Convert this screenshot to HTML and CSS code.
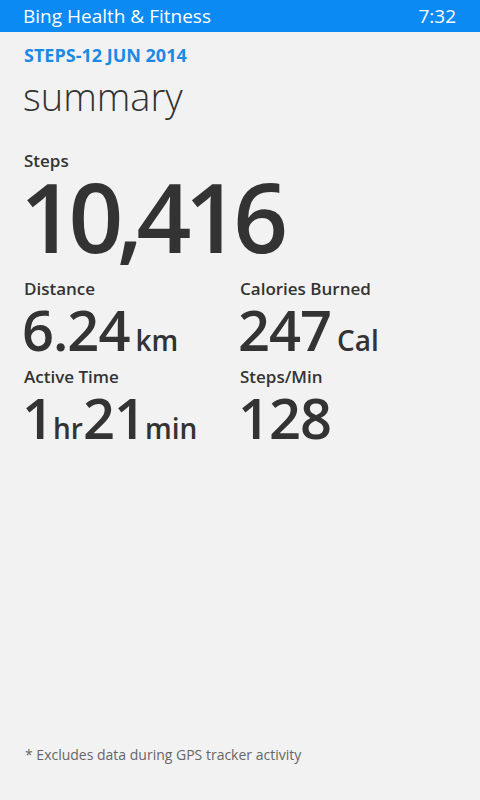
FILE: index.html
```html
<!DOCTYPE html>
<html lang="en">
<head>
  <meta charset="UTF-8">
  <title>Summary</title>
  <link rel="stylesheet" href="styles.css">
</head>
<body>

  <header class="status-bar">
    <span class="app-name">Bing Health &amp; Fitness</span>
    <span class="clock">7:32</span>
  </header>

  <main class="page">
    <div class="pivot-title">STEPS-12 JUN 2014</div>
    <h1 class="page-title">summary</h1>

    <div class="stat stat-big">
      <div class="label">Steps</div>
      <div class="value">10,416</div>
    </div>

    <div class="grid">
      <div class="stat">
        <div class="label">Distance</div>
        <div class="value">6.24<span class="unit gap">km</span></div>
      </div>
      <div class="stat">
        <div class="label">Calories Burned</div>
        <div class="value">247<span class="unit gap">Cal</span></div>
      </div>
      <div class="stat">
        <div class="label">Active Time</div>
        <div class="value">1<span class="unit">hr</span>21<span class="unit">min</span></div>
      </div>
      <div class="stat">
        <div class="label">Steps/Min</div>
        <div class="value">128</div>
      </div>
    </div>
  </main>

  <footer class="note">* Excludes data during GPS tracker activity</footer>

</body>
</html>
```

FILE: styles.css
```css
html, body {
  height: 100%;
}

body {
  margin: 0;
  background: #f2f2f2;
  color: #333;
  font-family: "Open Sans", "Noto Sans", sans-serif;
  display: flex;
  flex-direction: column;
}

.status-bar {
  background: #0a8af2;
  color: #fff;
  height: 32px;
  padding: 0 24px 0 23px;
  display: flex;
  justify-content: space-between;
  align-items: center;
  font-size: 19px;
}

.page {
  flex: 1;
  padding: 11px 24px 0 24px;
}

.pivot-title {
  color: #1a8ae6;
  font-weight: 700;
  font-size: 18px;
  line-height: 24px;
}

.page-title {
  margin: 4px 0 0 -1px;
  font-weight: 300;
  font-size: 38px;
  line-height: 50px;
  color: #333;
}

.stat-big {
  margin-top: 30px;
}

.label {
  font-size: 17px;
  line-height: 20px;
  font-weight: 600;
}

.stat-big .value {
  font-size: 96px;
  line-height: 90px;
  margin-left: -4px;
  letter-spacing: -6.5px;
}

.grid {
  display: grid;
  grid-template-columns: 216px 1fr;
  row-gap: 8px;
  margin-top: 18px;
}

.value {
  font-size: 56px;
  font-weight: 600;
  line-height: 60px;
  letter-spacing: -1px;
  margin-left: -2px;
}

.unit {
  font-size: 28px;
  line-height: 1;
  letter-spacing: 0;
}

.unit.gap {
  margin-left: 6px;
}

.note {
  padding: 0 24px 36px 25px;
  font-size: 14px;
  color: #666;
}
```
